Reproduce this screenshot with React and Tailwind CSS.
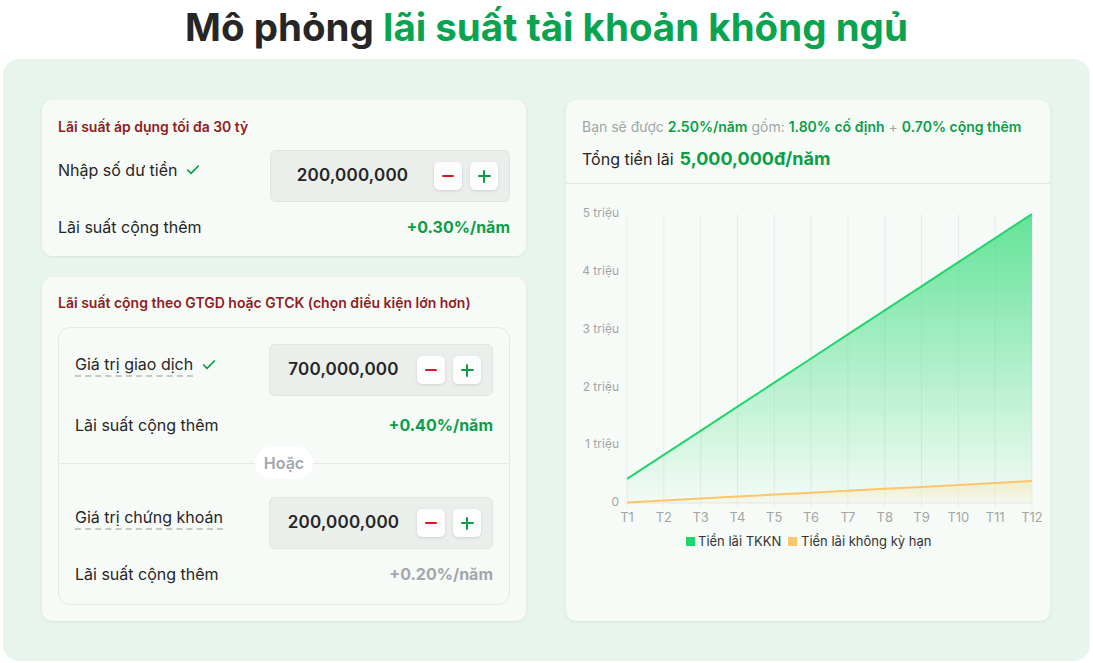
import React from "react";
import { Check } from "lucide-react";

const FONT = { fontFamily: "Inter, 'Noto Sans', sans-serif" };

function Stepper({ value, w }) {
  return (
    <div className={`flex h-[52px] shrink-0 items-center rounded-md border border-[#e1e5e2] bg-[#ebefec] pr-[11px] ${w}`}>
      <div className="flex-1 text-center text-[17px] font-semibold tracking-[0.2px] text-[#262626]">{value}</div>
      <div className="flex gap-2">
        <button className="flex h-[28px] w-[28px] items-center justify-center rounded-[5px] bg-[#fcfdfc] shadow-[0_1px_3px_rgba(0,0,0,0.12)]">
          <span className="block h-[2.5px] w-[12px] rounded bg-[#e8112d]" />
        </button>
        <button className="relative flex h-[28px] w-[28px] items-center justify-center rounded-[5px] bg-[#fcfdfc] shadow-[0_1px_3px_rgba(0,0,0,0.12)]">
          <span className="block h-[2.5px] w-[13px] rounded bg-[#0b9e48]" />
          <span className="absolute block h-[13px] w-[2.5px] rounded bg-[#0b9e48]" />
        </button>
      </div>
    </div>
  );
}

function Chart() {
  const X = (k) => 61 + (k - 1) * (405 / 11);
  const Y = (v) => 318 - v * 57.8;
  const ks = Array.from({ length: 12 }, (_, i) => i + 1);
  const green = ks.map((k) => [X(k), Y((k * 5) / 12)]);
  const orange = ks.map((k) => [X(k), Y(0.01 + ((k - 1) * 0.37) / 11)]);
  const line = (pts) => pts.map((p, i) => (i ? "L" : "M") + p[0].toFixed(1) + " " + p[1].toFixed(1)).join(" ");
  const area = (pts) => line(pts) + ` L ${X(12)} 318 L ${X(1)} 318 Z`;
  return (
    <svg width="484" height="380" viewBox="0 0 484 380" className="block">
      <defs>
        <linearGradient id="gg" x1="0" y1="0" x2="0" y2="1">
          <stop offset="0%" stopColor="#3fdd80" stopOpacity="0.8" />
          <stop offset="100%" stopColor="#3fdd80" stopOpacity="0.02" />
        </linearGradient>
        <linearGradient id="og" x1="0" y1="0" x2="0" y2="1">
          <stop offset="0%" stopColor="#fde4a8" stopOpacity="0.5" />
          <stop offset="100%" stopColor="#fde4a8" stopOpacity="0.1" />
        </linearGradient>
      </defs>
      {ks.map((k) => (
        <line key={"g" + k} x1={X(k)} x2={X(k)} y1={29} y2={323} stroke="#e8ebe9" strokeWidth="1" />
      ))}
      <line x1={X(1)} x2={X(12)} y1={318} y2={318} stroke="#e3e6e4" strokeWidth="1" />
      <path d={area(green)} fill="url(#gg)" />
      <path d={area(orange)} fill="url(#og)" />
      <path d={line(green)} fill="none" stroke="#22d36e" strokeWidth="2" />
      <path d={line(orange)} fill="none" stroke="#fcc56b" strokeWidth="2" />
      {[0, 1, 2, 3, 4, 5].map((v) => (
        <text key={"y" + v} x={53} y={Y(v)} textAnchor="end" dominantBaseline="middle" fontSize="12" fill="#a3a6a4" style={FONT}>
          {v === 0 ? "0" : `${v} triệu`}
        </text>
      ))}
      {ks.map((k) => (
        <text key={"x" + k} x={X(k)} y={333} textAnchor="middle" dominantBaseline="middle" fontSize="13" fill="#a3a6a4" style={FONT}>
          {"T" + k}
        </text>
      ))}
      <rect x={120} y={352} width={9} height={9} fill="#22d36e" />
      <text x={132} y={357} dominantBaseline="middle" fontSize="13" fill="#333" style={FONT}>Tiền lãi TKKN</text>
      <rect x={222} y={352} width={9} height={9} fill="#fcc86b" />
      <text x={235} y={357} dominantBaseline="middle" fontSize="13" fill="#333" style={FONT}>Tiền lãi không kỳ hạn</text>
    </svg>
  );
}

export default function App() {
  return (
    <div className="min-h-[663px] w-full bg-white" style={FONT}>
      <div className="flex h-[59px] items-center justify-center pb-[4px]">
        <h1 className="text-[38.5px] font-bold leading-none text-[#262626]">
          Mô phỏng <span className="text-[#0aa451]">lãi suất tài khoản không ngủ</span>
        </h1>
      </div>
      <div className="mx-[3px] flex gap-[40px] rounded-2xl bg-[#e8f5ec] pb-[40px] pl-[39px] pr-[40px] pt-[41px]">
        <div className="flex w-[484px] flex-col gap-[21px]">
          <div className="rounded-[10px] bg-[#f7fbf8] px-4 pb-[17px] pt-[17px] shadow-[0_1px_3px_rgba(0,0,0,0.08)]">
            <div className="text-[14px] font-semibold leading-5 text-[#921b1f]">Lãi suất áp dụng tối đa 30 tỷ</div>
            <div className="mt-[13px] flex items-start justify-between">
              <div className="flex items-center gap-2 pt-2 text-[16px] leading-6 text-[#262626]">
                Nhập số dư tiền <Check size={16} strokeWidth={2.6} className="text-[#0b9e48]" />
              </div>
              <Stepper value="200,000,000" w="w-[240px]" />
            </div>
            <div className="mt-[13px] flex items-center justify-between text-[16px] leading-6">
              <span className="text-[#262626]">Lãi suất cộng thêm</span>
              <span className="font-bold text-[#0b9e48]">+0.30%/năm</span>
            </div>
          </div>

          <div className="flex-1 rounded-[10px] bg-[#f7fbf8] px-4 pb-[16px] pt-[16px] shadow-[0_1px_3px_rgba(0,0,0,0.08)]">
            <div className="text-[14px] font-semibold leading-5 text-[#921b1f]">
              Lãi suất cộng theo GTGD hoặc GTCK (chọn điều kiện lớn hơn)
            </div>
            <div className="mt-[14px] rounded-xl border border-[#e4ebe6]">
              <div className="px-4 pt-4">
                <div className="flex items-start justify-between">
                  <div className="flex items-center gap-2 pt-[9px] text-[16px] leading-6 text-[#262626]">
                    <span className="border-b-2 border-dashed border-[#c5c9c6] leading-[22px]">Giá trị giao dịch</span>
                    <Check size={16} strokeWidth={2.6} className="text-[#0b9e48]" />
                  </div>
                  <Stepper value="700,000,000" w="w-[224px]" />
                </div>
                <div className="mt-[17px] flex items-center justify-between text-[16px] leading-6">
                  <span className="text-[#262626]">Lãi suất cộng thêm</span>
                  <span className="font-bold text-[#0b9e48]">+0.40%/năm</span>
                </div>
              </div>
              <div className="relative mt-[26px] border-t border-[#e4ebe6]">
                <div className="absolute left-1/2 top-[-17px] flex h-[32px] w-[58px] -translate-x-1/2 items-center justify-center rounded-full bg-white text-[16px] font-semibold text-[#a3a6ab]">
                  Hoặc
                </div>
              </div>
              <div className="px-4 pb-[18px] pt-[33px]">
                <div className="flex items-start justify-between">
                  <div className="flex items-center gap-2 pt-[9px] text-[16px] leading-6 text-[#262626]">
                    <span className="border-b-2 border-dashed border-[#c5c9c6] leading-[22px]">Giá trị chứng khoán</span>
                  </div>
                  <Stepper value="200,000,000" w="w-[224px]" />
                </div>
                <div className="mt-[13px] flex items-center justify-between text-[16px] leading-6">
                  <span className="text-[#262626]">Lãi suất cộng thêm</span>
                  <span className="font-bold text-[#a3a6ab]">+0.20%/năm</span>
                </div>
              </div>
            </div>
          </div>
        </div>

        <div className="w-[484px] rounded-[10px] bg-[#f7fbf8] shadow-[0_1px_3px_rgba(0,0,0,0.08)]">
          <div className="border-b border-[#e3e8e5] px-4 pb-[12px] pt-[17px]">
            <div className="text-[14px] leading-5 text-[#a3a6a4]">
              Bạn sẽ được <span className="font-semibold text-[#0b9e48]">2.50%/năm</span> gồm:{" "}
              <span className="font-semibold text-[#0b9e48]">1.80% cố định</span> +{" "}
              <span className="font-semibold text-[#0b9e48]">0.70% cộng thêm</span>
            </div>
            <div className="mt-[10px] flex items-center gap-[6px] leading-6">
              <span className="text-[16px] text-[#262626]">Tổng tiền lãi</span>
              <span className="text-[18px] font-bold text-[#0b9e48]">5,000,000đ/năm</span>
            </div>
          </div>
          <div className="pt-[1px]">
            <Chart />
          </div>
        </div>
      </div>
    </div>
  );
}
